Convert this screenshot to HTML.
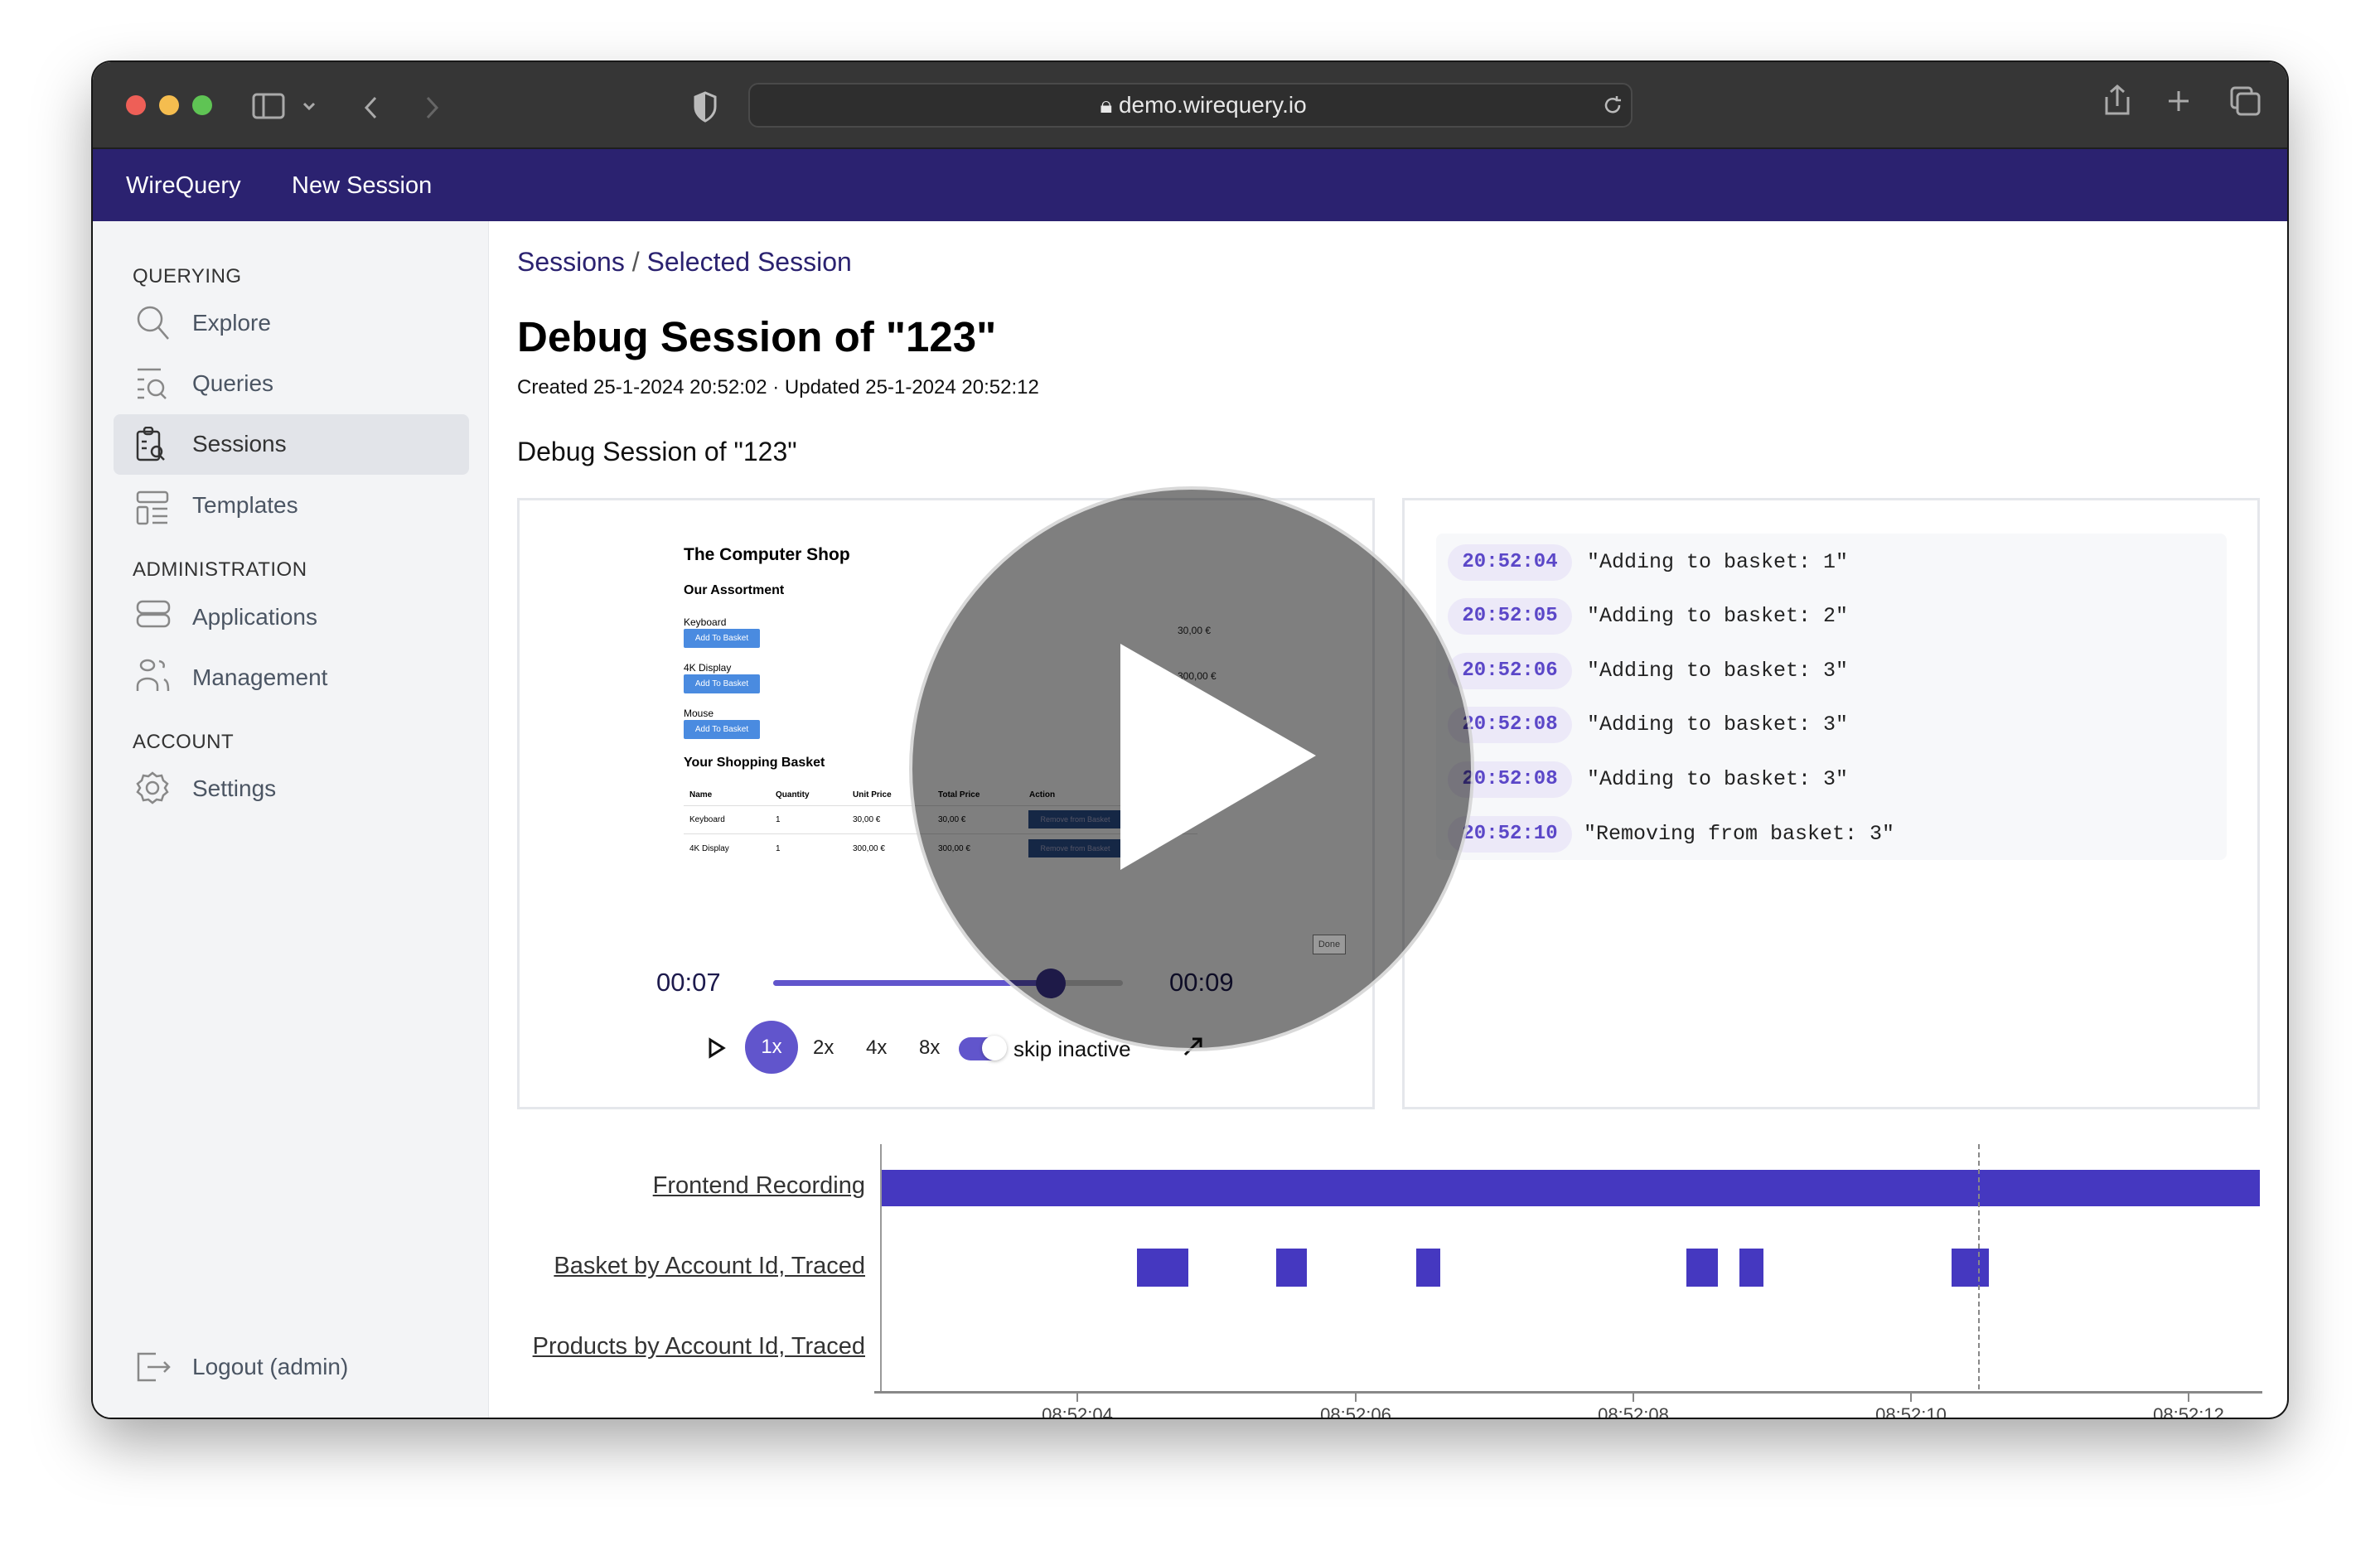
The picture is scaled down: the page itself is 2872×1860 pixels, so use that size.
<!DOCTYPE html>
<html><head><meta charset="utf-8"><style>
*{box-sizing:border-box;margin:0;padding:0}
body{width:2872px;height:1860px;background:#fff;position:relative;overflow:hidden;font-family:"Liberation Sans",sans-serif}
.a{position:absolute}
.win{left:112px;top:75px;width:2648px;height:1636px;border-radius:22px;overflow:hidden;box-shadow:0 30px 70px rgba(0,0,0,.35),0 0 0 2px #1a1a1a;background:#fff}
.tb{left:0;top:0;width:100%;height:105px;background:#363636;border-bottom:2px solid #1e1e1e}
.nav{left:0;top:105px;width:100%;height:87px;background:#2b2270;color:#fff;font-size:29px}
.side{left:0;top:192px;width:478px;height:1444px;background:#f3f4f6;border-right:1px solid #e5e7eb}
.sec{font-size:24px;color:#333;left:48px;letter-spacing:.5px}
.it{font-size:28px;color:#4b5563;left:120px}
.ic{left:52px}
.sel{left:25px;top:233px;width:429px;height:73px;background:#e2e4e9;border-radius:8px}
.card{border:3px solid #e5e7eb;background:#fff}
.pill{left:14px;width:150px;height:44px;border-radius:22px;background:#ece9f8;color:#5b47c8;font-family:"Liberation Mono",monospace;font-size:24px;line-height:44px;text-align:center;font-weight:bold}
.lt{left:182px;font-family:"Liberation Mono",monospace;font-size:25px;color:#222;line-height:44px}
.row{left:0;width:954px;height:66px;background:#f7f8fa}
.lbl{font-size:29px;color:#333;text-decoration:underline;text-align:right;width:420px}
.tick{font-size:22px;color:#444;width:110px;text-align:center}
.tm{width:2px;height:10px;background:#888;top:1607px}
.bar{background:#4538c0}
.btn{width:92px;height:23px;background:#4a8be0;color:#fff;font-size:10px;line-height:23px;text-align:center;border-radius:2px;left:198px}
.rb{left:614px;width:113px;height:22px;background:#2a4f8a;color:#aac;font-size:9px;line-height:22px;text-align:center}
</style></head><body>
<div class="a win">
 <div class="a tb">
  <div class="a" style="left:40px;top:40px;width:24px;height:24px;border-radius:50%;background:#ee5f57"></div>
  <div class="a" style="left:80px;top:40px;width:24px;height:24px;border-radius:50%;background:#f5bd4f"></div>
  <div class="a" style="left:120px;top:40px;width:24px;height:24px;border-radius:50%;background:#5fc454"></div>
  <svg class="a" style="left:192px;top:36px" width="170" height="34" viewBox="0 0 170 34" fill="none" stroke="#aaa" stroke-width="3"><rect x="2" y="3" width="36" height="28" rx="4"/><line x1="14" y1="3" x2="14" y2="31"/><path d="M63 14l6 6 6-6"/></svg>
  <svg class="a" style="left:322px;top:40px" width="30" height="30" fill="none" stroke="#aaa" stroke-width="3"><path d="M19 3l-11 12 11 12"/></svg>
  <svg class="a" style="left:395px;top:40px" width="30" height="30" fill="none" stroke="#666" stroke-width="3"><path d="M9 3l11 12-11 12"/></svg>
  <svg class="a" style="left:724px;top:35px" width="30" height="38" viewBox="0 0 30 38"><path d="M15 2L3 7v12c0 8 6 14 12 17 6-3 12-9 12-17V7z" fill="none" stroke="#bbb" stroke-width="3"/><path d="M15 2L3 7v12c0 8 6 14 12 17z" fill="#bbb"/></svg>
  <div class="a" style="left:791px;top:25px;width:1067px;height:54px;border-radius:12px;background:#2e2e2e;border:2px solid #4a4a4a"></div>
  <div class="a" style="left:1090px;top:36px;width:500px;text-align:center;color:#e8e8e8;font-size:28px">&#x1F512;&#xFE0E; demo.wirequery.io</div>
  <svg class="a" style="left:1820px;top:38px" width="28" height="28" fill="none" stroke="#bbb" stroke-width="2.5"><path d="M22 14a8 8 0 1 1-3-6M19 3v5h5"/></svg>
  <svg class="a" style="left:2424px;top:27px" width="220" height="40" viewBox="0 0 220 40" fill="none" stroke="#aaa" stroke-width="3"><path d="M6 15v20h26V15M19 2v24M11 9l8-7 8 7"/><path d="M93 8v24M81 20h24"/><rect x="157" y="4" width="24" height="24" rx="4"/><rect x="164" y="11" width="26" height="25" rx="4" fill="#363636"/></svg>
 </div>
 <div class="a nav"><span class="a" style="left:40px;top:28px">WireQuery</span><span class="a" style="left:240px;top:28px">New Session</span></div>
 <div class="a side">
  <div class="a sel"></div>
  <div class="a sec" style="top:53px">QUERYING</div>
  <svg class="a ic" style="top:101px" width="44" height="46" fill="none" stroke="#888" stroke-width="2.5"><circle cx="17" cy="17" r="14"/><path d="M27 27l12 14"/></svg>
  <div class="a it" style="top:107px">Explore</div>
  <svg class="a ic" style="top:177px" width="44" height="40" fill="none" stroke="#888" stroke-width="2.5"><path d="M2 2h28M2 14h8M2 26h8M2 36h8"/><circle cx="24" cy="24" r="9"/><path d="M30 31l6 6"/></svg>
  <div class="a it" style="top:180px">Queries</div>
  <svg class="a ic" style="top:248px" width="44" height="44" fill="none" stroke="#333" stroke-width="2.5"><rect x="2" y="6" width="26" height="34" rx="3"/><rect x="10" y="1" width="10" height="8" rx="3"/><path d="M7 18h6M7 26h6"/><circle cx="25" cy="30" r="6"/><path d="M29 35l5 5"/></svg>
  <div class="a it" style="top:253px;color:#333">Sessions</div>
  <svg class="a ic" style="top:325px" width="44" height="44" fill="none" stroke="#888" stroke-width="2.5"><rect x="2" y="2" width="36" height="12" rx="3"/><rect x="2" y="20" width="12" height="20" rx="2"/><path d="M20 22h18M20 31h18M20 39h18"/></svg>
  <div class="a it" style="top:327px">Templates</div>
  <div class="a sec" style="top:407px">ADMINISTRATION</div>
  <svg class="a ic" style="top:457px" width="44" height="36" fill="none" stroke="#888" stroke-width="2.5"><rect x="2" y="2" width="38" height="14" rx="6"/><rect x="2" y="18" width="38" height="14" rx="6"/></svg>
  <div class="a it" style="top:462px">Applications</div>
  <svg class="a ic" style="top:527px" width="44" height="44" fill="none" stroke="#888" stroke-width="2.5"><ellipse cx="14" cy="9" rx="8" ry="6"/><path d="M2 40v-6c0-6 6-9 12-9s12 3 12 9v6M28 4c5 1 7 4 5 8M34 26c4 2 5 6 5 14"/></svg>
  <div class="a it" style="top:535px">Management</div>
  <div class="a sec" style="top:615px">ACCOUNT</div>
  <svg class="a ic" style="top:663px" width="44" height="44" fill="none" stroke="#888" stroke-width="2.5"><circle cx="20" cy="21" r="7"/><path d="M20 3l5 4 6-1 2 6 5 4-3 5 3 5-5 4-2 6-6-1-5 4-5-4-6 1-2-6-5-4 3-5-3-5 5-4 2-6 6 1z"/></svg>
  <div class="a it" style="top:669px">Settings</div>
  <svg class="a ic" style="top:1364px" width="44" height="40" fill="none" stroke="#888" stroke-width="2.5"><path d="M24 3H3v32h21M14 19h26M34 13l6 6-6 6"/></svg>
  <div class="a it" style="top:1367px">Logout (admin)</div>
 </div>
 <!-- main -->
 <div class="a" style="left:512px;top:223px;font-size:32px;color:#2b2270">Sessions <span style="color:#555">/</span> Selected Session</div>
 <div class="a" style="left:512px;top:302px;font-size:51px;font-weight:bold;color:#000">Debug Session of "123"</div>
 <div class="a" style="left:512px;top:379px;font-size:24px;color:#111">Created 25-1-2024 20:52:02 · Updated 25-1-2024 20:52:12</div>
 <div class="a" style="left:512px;top:452px;font-size:32px;color:#111">Debug Session of "123"</div>
 <div class="a card" style="left:512px;top:526px;width:1035px;height:738px">
  <div class="a" style="left:198px;top:54px;font-size:21px;font-weight:bold">The Computer Shop</div>
  <div class="a" style="left:198px;top:100px;font-size:16px;font-weight:bold">Our Assortment</div>
  <div class="a" style="left:198px;top:140px;font-size:12px">Keyboard</div>
  <div class="a btn" style="top:155px">Add To Basket</div>
  <div class="a" style="left:198px;top:195px;font-size:12px">4K Display</div>
  <div class="a btn" style="top:210px">Add To Basket</div>
  <div class="a" style="left:198px;top:250px;font-size:12px">Mouse</div>
  <div class="a btn" style="top:265px">Add To Basket</div>
  <div class="a" style="left:198px;top:308px;font-size:16px;font-weight:bold">Your Shopping Basket</div>
  <div class="a" style="left:205px;top:350px;font-size:10px;font-weight:bold;width:560px"><span class="a" style="left:0">Name</span><span class="a" style="left:104px">Quantity</span><span class="a" style="left:197px">Unit Price</span><span class="a" style="left:300px">Total Price</span><span class="a" style="left:410px">Action</span></div>
  <div class="a" style="left:198px;top:368px;width:620px;border-top:1px solid #ddd"></div>
  <div class="a" style="left:205px;top:380px;font-size:10px;width:560px"><span class="a" style="left:0">Keyboard</span><span class="a" style="left:104px">1</span><span class="a" style="left:197px">30,00 €</span><span class="a" style="left:300px">30,00 €</span></div>
  <div class="a rb" style="top:374px">Remove from Basket</div>
  <div class="a" style="left:198px;top:402px;width:620px;border-top:1px solid #ddd"></div>
  <div class="a" style="left:205px;top:415px;font-size:10px;width:560px"><span class="a" style="left:0">4K Display</span><span class="a" style="left:104px">1</span><span class="a" style="left:197px">300,00 €</span><span class="a" style="left:300px">300,00 €</span></div>
  <div class="a rb" style="top:409px">Remove from Basket</div>
  <div class="a" style="left:794px;top:150px;font-size:12px;color:#222">30,00 €</div>
  <div class="a" style="left:794px;top:205px;font-size:12px;color:#222">300,00 €</div>
  <div class="a" style="left:165px;top:564px;font-size:31px;color:#1d1a4d">00:07</div>
  <div class="a" style="left:306px;top:579px;width:422px;height:7px;background:#ccc;border-radius:4px"></div>
  <div class="a" style="left:306px;top:579px;width:334px;height:7px;background:#6155cc;border-radius:4px"></div>
  <div class="a" style="left:623px;top:565px;width:36px;height:36px;border-radius:50%;background:#3d3491"></div>
  <div class="a" style="left:784px;top:564px;font-size:31px;color:#1d1a4d">00:09</div>
  <svg class="a" style="left:227px;top:648px" width="22" height="26"><path d="M3 3l16 10-16 10z" fill="none" stroke="#111" stroke-width="3"/></svg>
  <div class="a" style="left:272px;top:628px;width:64px;height:64px;border-radius:50%;background:#6155cc;color:#fff;font-size:24px;line-height:64px;text-align:center">1x</div>
  <div class="a" style="left:354px;top:647px;font-size:24px;color:#222">2x</div>
  <div class="a" style="left:418px;top:647px;font-size:24px;color:#222">4x</div>
  <div class="a" style="left:482px;top:647px;font-size:24px;color:#222">8x</div>
  <div class="a" style="left:530px;top:648px;width:54px;height:28px;border-radius:14px;background:#6155cc"></div>
  <div class="a" style="left:558px;top:646px;width:30px;height:30px;border-radius:50%;background:#fff;box-shadow:0 1px 4px rgba(0,0,0,.3)"></div>
  <div class="a" style="left:596px;top:647px;font-size:26px;color:#111">skip inactive</div>
  <svg class="a" style="left:800px;top:646px" width="26" height="26" fill="none" stroke="#111" stroke-width="3"><path d="M3 23L22 4M12 4h10v10"/></svg>
 </div>
 <!-- log card -->
 <div class="a card" style="left:1580px;top:526px;width:1035px;height:738px">
  <div class="a" style="left:38px;top:40px;width:954px;height:394px">
   <div class="a row" style="top:0;border-radius:8px 8px 0 0"></div>
   <div class="a row" style="top:66px"></div><div class="a row" style="top:132px"></div><div class="a row" style="top:198px"></div><div class="a row" style="top:264px"></div><div class="a row" style="top:330px;height:64px;border-radius:0 0 8px 8px"></div>
   <div class="a pill" style="top:13px">20:52:04</div><div class="a lt" style="top:13px">"Adding to basket: 1"</div>
   <div class="a pill" style="top:78px">20:52:05</div><div class="a lt" style="top:78px">"Adding to basket: 2"</div>
   <div class="a pill" style="top:144px">20:52:06</div><div class="a lt" style="top:144px">"Adding to basket: 3"</div>
   <div class="a pill" style="top:209px">20:52:08</div><div class="a lt" style="top:209px">"Adding to basket: 3"</div>
   <div class="a pill" style="top:275px">20:52:08</div><div class="a lt" style="top:275px">"Adding to basket: 3"</div>
   <div class="a pill" style="top:341px">20:52:10</div><div class="a lt" style="top:341px;left:178px">"Removing from basket: 3"</div>
  </div>
 </div>
 <!-- overlay -->
 <div class="a" style="left:985px;top:512px;width:682px;height:682px;border-radius:50%;background:rgba(0,0,0,.5);border:4px solid rgba(255,255,255,.7)"></div>
 <svg class="a" style="left:985px;top:512px" width="682" height="682"><path d="M255 190L491 325 255 463z" fill="#fff"/></svg>
 <div class="a" style="left:1472px;top:1053px;width:40px;height:24px;border:1px solid #444;font-size:11px;line-height:22px;text-align:center;color:#333;background:#999">Done</div>
 <!-- timeline -->
 <div class="a" style="left:950px;top:1306px;width:2px;height:300px;background:#999"></div>
 <div class="a" style="left:943px;top:1604px;width:1675px;height:3px;background:#888"></div>
 <div class="a bar" style="left:952px;top:1337px;width:1663px;height:44px"></div>
 <div class="a bar" style="left:1260px;top:1432px;width:62px;height:46px"></div>
 <div class="a bar" style="left:1428px;top:1432px;width:37px;height:46px"></div>
 <div class="a bar" style="left:1597px;top:1432px;width:29px;height:46px"></div>
 <div class="a bar" style="left:1923px;top:1432px;width:38px;height:46px"></div>
 <div class="a bar" style="left:1987px;top:1432px;width:29px;height:46px"></div>
 <div class="a bar" style="left:2243px;top:1432px;width:45px;height:46px"></div>
 <div class="a" style="left:2275px;top:1306px;height:296px;border-left:2px dashed #888"></div>
 <div class="a lbl" style="left:512px;top:1340px">Frontend Recording</div>
 <div class="a lbl" style="left:512px;top:1437px">Basket by Account Id, Traced</div>
 <div class="a lbl" style="left:512px;top:1534px">Products by Account Id, Traced</div>
 <div class="a tm" style="left:1187px"></div><div class="a tm" style="left:1523px"></div><div class="a tm" style="left:1858px"></div><div class="a tm" style="left:2193px"></div><div class="a tm" style="left:2528px"></div>
 <div class="a tick" style="left:1133px;top:1620px">08:52:04</div>
 <div class="a tick" style="left:1469px;top:1620px">08:52:06</div>
 <div class="a tick" style="left:1804px;top:1620px">08:52:08</div>
 <div class="a tick" style="left:2139px;top:1620px">08:52:10</div>
 <div class="a tick" style="left:2474px;top:1620px">08:52:12</div>
</div>
</body></html>
